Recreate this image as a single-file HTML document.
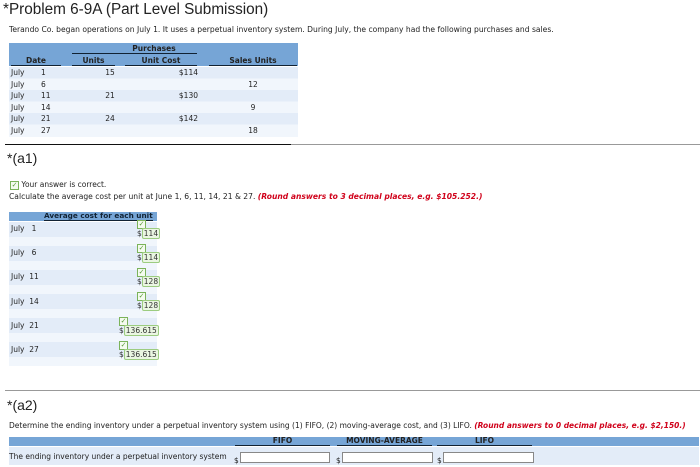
<!DOCTYPE html>
<html><head><style>
*{margin:0;padding:0;box-sizing:border-box}
body{width:700px;height:467px;background:#fff;font-family:"DejaVu Sans","Liberation Sans",sans-serif;color:#222;position:relative;overflow:hidden}
.a{position:absolute;white-space:nowrap}
.s{font-size:7.5px}
h1{position:absolute;left:3px;top:1px;font:15.3px "Liberation Sans",sans-serif;}
.h2{font:14px "Liberation Sans",sans-serif}
.red{color:#d0021b;font-weight:bold;font-style:italic}
.hd{background:#76a5d6}
.chk{display:inline-block;width:9px;height:9px;border:1px solid #7bb35a;background:#f4fbef;font-size:7px;color:#5a9a3a;line-height:7px;text-align:center}
.ans{position:absolute;font-size:7.5px;color:#333}
.ans b{font-weight:normal;background:#eaf6e2;border:1px solid #9ccc80;border-radius:2px;padding:0 1px}
.inp{position:absolute;height:11px;border:1px solid #888;background:#fff}
</style></head><body>
<h1>*Problem 6-9A (Part Level Submission)</h1>
<div class="a s" style="left:9px;top:25px;font-size:7.6px">Terando Co. began operations on July 1. It uses a perpetual inventory system. During July, the company had the following purchases and sales.</div>

<div class="a hd" style="left:9px;top:43px;width:289px;height:23px"></div>
<div class="a s" style="left:113px;top:44px;font-weight:bold;width:82px;text-align:center">Purchases</div>
<div class="a" style="left:72px;top:53px;width:125px;height:1px;background:#123"></div>
<div class="a s" style="left:11px;top:56px;width:50px;text-align:center;font-weight:bold;border-bottom:1px solid #123">Date</div>
<div class="a s" style="left:72px;top:56px;width:43px;text-align:center;font-weight:bold;border-bottom:1px solid #123">Units</div>
<div class="a s" style="left:125px;top:56px;width:72px;text-align:center;font-weight:bold;border-bottom:1px solid #123">Unit Cost</div>
<div class="a s" style="left:209px;top:56px;width:88px;text-align:center;font-weight:bold;border-bottom:1px solid #123">Sales Units</div>
<div class="a" style="left:9px;top:67px;width:289px;height:70px;background:linear-gradient(#e3ecf8 0 11.5px,#f1f6fc 11.5px 23px,#e3ecf8 23px 34.5px,#f1f6fc 34.5px 46px,#e3ecf8 46px 57.5px,#f1f6fc 57.5px 70px)"></div>
<div class="a s" style="left:11px;top:67px;line-height:11.5px">July<br>July<br>July<br>July<br>July<br>July</div>
<div class="a s" style="left:41px;top:67px;line-height:11.5px">1<br>6<br>11<br>14<br>21<br>27</div>
<div class="a s" style="left:100px;top:67px;line-height:11.5px;width:20px;text-align:center">15<br>&nbsp;<br>21<br>&nbsp;<br>24</div>
<div class="a s" style="left:168px;top:67px;line-height:11.5px;width:30px;text-align:right">$114<br>&nbsp;<br>$130<br>&nbsp;<br>$142</div>
<div class="a s" style="left:243px;top:67px;line-height:11.5px;width:20px;text-align:center">&nbsp;<br>12<br>&nbsp;<br>9<br>&nbsp;<br>18</div>

<div class="a" style="left:5px;top:144px;width:286px;height:1px;background:#111"></div>
<div class="a" style="left:291px;top:144px;width:409px;height:1px;background:#999"></div>
<div class="a h2" style="left:7px;top:150px">*(a1)</div>
<div class="a s" style="left:10px;top:180px"><span class="chk">✓</span> Your answer is correct.</div>
<div class="a s" style="left:9px;top:192px;font-size:7.6px">Calculate the average cost per unit at June 1, 6, 11, 14, 21 &amp; 27. <span class="red">(Round answers to 3 decimal places, e.g. $105.252.)</span></div>

<div class="a hd" style="left:9px;top:212px;width:148px;height:9px"></div>
<div class="a s" style="left:44px;top:212px;font-weight:bold;color:#123;border-bottom:1px solid #123;line-height:8px;font-size:7.3px">Average cost for each unit</div>
<div class="a" style="left:9px;top:222px;width:148px;height:144px;background:repeating-linear-gradient(#e3ecf8 0 15px,#f1f6fc 15px 24px)"></div>
<div class="a s" style="left:11px;top:217px;line-height:24.2px">July&nbsp;&nbsp;&nbsp;1<br>July&nbsp;&nbsp;&nbsp;6<br>July&nbsp;&nbsp;11<br>July&nbsp;&nbsp;14<br>July&nbsp;&nbsp;21<br>July&nbsp;&nbsp;27</div>
<div class="ans" style="left:137px;top:220px"><span class="chk" style="display:block">✓</span>$<b>114</b></div>
<div class="ans" style="left:137px;top:244px"><span class="chk" style="display:block">✓</span>$<b>114</b></div>
<div class="ans" style="left:137px;top:268px"><span class="chk" style="display:block">✓</span>$<b>128</b></div>
<div class="ans" style="left:137px;top:292px"><span class="chk" style="display:block">✓</span>$<b>128</b></div>
<div class="ans" style="left:119px;top:317px"><span class="chk" style="display:block">✓</span>$<b>136.615</b></div>
<div class="ans" style="left:119px;top:341px"><span class="chk" style="display:block">✓</span>$<b>136.615</b></div>

<div class="a" style="left:5px;top:390px;width:695px;height:1px;background:#999"></div>
<div class="a h2" style="left:7px;top:397px">*(a2)</div>
<div class="a s" style="left:9px;top:421px;font-size:7.5px">Determine the ending inventory under a perpetual inventory system using (1) FIFO, (2) moving-average cost, and (3) LIFO. <span class="red">(Round answers to 0 decimal places, e.g. $2,150.)</span></div>
<div class="a hd" style="left:9px;top:437px;width:690px;height:9px"></div>
<div class="a s" style="left:235px;top:437px;width:95px;text-align:center;font-weight:bold;border-bottom:1px solid #123;line-height:8px">FIFO</div>
<div class="a s" style="left:337px;top:437px;width:95px;text-align:center;font-weight:bold;border-bottom:1px solid #123;line-height:8px">MOVING-AVERAGE</div>
<div class="a s" style="left:437px;top:437px;width:95px;text-align:center;font-weight:bold;border-bottom:1px solid #123;line-height:8px">LIFO</div>
<div class="a" style="left:9px;top:447px;width:690px;height:18px;background:#e3ecf8"></div>
<div class="a s" style="left:9px;top:452px">The ending inventory under a perpetual inventory system</div>
<div class="a s" style="left:234px;top:456px">$</div><div class="inp" style="left:240px;top:452px;width:90px"></div>
<div class="a s" style="left:336px;top:456px">$</div><div class="inp" style="left:342px;top:452px;width:91px"></div>
<div class="a s" style="left:437px;top:456px">$</div><div class="inp" style="left:443px;top:452px;width:91px"></div>
</body></html>
